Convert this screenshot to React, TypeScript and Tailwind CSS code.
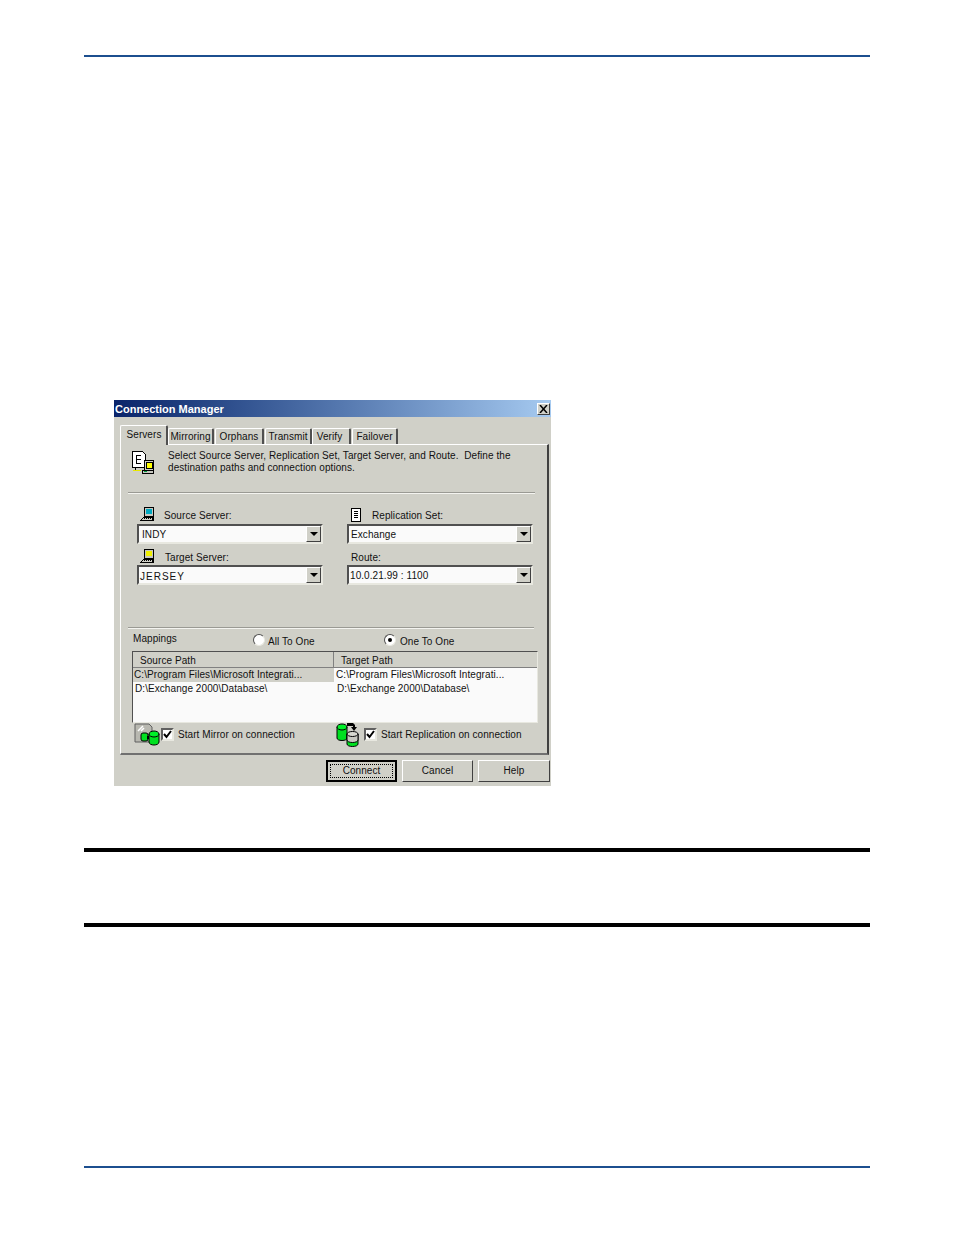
import React from 'react';

const Win = 'border border-t-white border-l-white border-r-[#404040] border-b-[#404040]';

const ComputerIcon = ({ screen }: { screen: string }) => (
    <svg width="15" height="15" viewBox="0 0 15 15" shapeRendering="crispEdges" className="shrink-0">
        <path d="M4 0h10v10H4z" fill="#000" />
        <path d="M5 1h8v8H5z" fill="#c8c8c0" />
        <path d="M6 2h6v5H6z" fill={screen} />
        <path d="M3 10h11v1H3zM2 11h12v1H2zM1 12h13v1H1zM0 13h14v1H0z" fill="#000" />
        <path d="M3 11h1v1H3zM5 11h1v1H5zM7 11h1v1H7zM9 11h1v1H9zM11 11h1v1h-1zM2 12h10v1H2z" fill="#d0d0c8" />
    </svg>
);

const DocIcon = () => (
    <svg width="10" height="14" viewBox="0 0 10 14" shapeRendering="crispEdges" className="shrink-0">
        <path d="M0 0h10v14H0z" fill="#000" />
        <path d="M1 1h8v12H1z" fill="#fff" />
        <path d="M3 3h4v1H3zM3 5h4v1H3zM3 7h4v1H3zM3 9h4v1H3z" fill="#000" />
    </svg>
);

const InfoIcon = () => (
    <svg width="24" height="24" viewBox="0 0 24 24" shapeRendering="crispEdges" className="shrink-0">
        <path d="M1 0h10l3 3v13H1z" fill="#fff" stroke="#000" />
        <path d="M5 4h5v1H6v3h4v1H6v3h4v1H5z" fill="#000" />
        <path d="M4 17h1v3H4z" fill="#000" />
        <path d="M2 19h8v1H2z" fill="#e8e800" />
        <path d="M13 9h9v10h-9z" fill="#d0d0c8" stroke="#000" />
        <path d="M15 11h6v6h-6z" fill="#ffff00" stroke="#000" />
        <path d="M11 19h12v4H11z" fill="#000" />
        <path d="M12 20h10v2H12z" fill="#c8c8c0" />
        <path d="M13 20h3v1h-3z" fill="#00a040" />
    </svg>
);

const MirrorIcon = () => (
    <svg width="26" height="23" viewBox="0 0 26 23" className="shrink-0">
        <path d="M1 1h14l3 3v15H1z" fill="#b8b8b0" stroke="#606060" />
        <path d="M4 8l5-5M7 8l3-3" stroke="#fff" strokeWidth="1.5" />
        <rect x="7" y="10" width="7" height="8" rx="2" fill="#00e020" stroke="#000" />
        <path d="M13 13h3v3h-3z" fill="#000" />
        <path d="M15 11v8c0 2 2.500 3 5 3s5-1 5-3v-8z" fill="#00e020" stroke="#000" />
        <ellipse cx="20" cy="11" rx="5" ry="3" fill="#00f028" stroke="#000" />
    </svg>
);

const ReplicationIcon = () => (
    <svg width="23" height="24" viewBox="0 0 23 24" className="shrink-0">
        <path d="M1 4v11c0 1.500 2 2.500 5 2.500s5-1 5-2.500V4z" fill="#00e020" stroke="#000" />
        <ellipse cx="6" cy="4" rx="5" ry="3" fill="#00f028" stroke="#000" />
        <path d="M11 11v10c0 1.500 2.500 2.500 5.500 2.500s5.500-1 5.500-2.500V11z" fill="#00e020" stroke="#000" />
        <path d="M11 11v6c0 1.500 2.500 2.500 5.500 2.500s5.500-1 5.500-2.500v-6z" fill="#c8c8c0" stroke="#000" />
        <ellipse cx="16.500" cy="11" rx="5.500" ry="2.500" fill="#d8d8d0" stroke="#000" />
        <path d="M11 0h6l2 2v2h2l-3 4-3-4h2V3h-6z" fill="#000" />
    </svg>
);

const Tab = ({ label, className }: { label: string; className: string }) => (
    <div className={`h-[16px] mt-[3px] border-t border-l border-white border-r-2 border-r-[#505050] rounded-t-[2px] flex items-center justify-center text-[#111] ${className}`}>
        {label}
    </div>
);

const Combo = ({ value, className }: { value: string; className?: string }) => (
    <div className="h-[20px] w-[186px] border-2 border-t-[#505050] border-l-[#505050] border-r-[#e8e8e0] border-b-[#e8e8e0] bg-[#fafafa] flex items-center justify-between">
        <span className={`text-[#111] ${className ?? ''}`}>{value}</span>
        <div className={`w-[15px] h-[16px] bg-[#d0d0c8] flex items-center justify-center ${Win}`}>
            <div className="w-0 h-0 border-l-[4px] border-r-[4px] border-t-[4px] border-l-transparent border-r-transparent border-t-black" />
        </div>
    </div>
);

const Radio = ({ checked }: { checked?: boolean }) => (
    <div className="w-[12px] h-[12px] rounded-full bg-white border border-t-[#505050] border-l-[#505050] border-r-[#e8e8e0] border-b-[#e8e8e0] flex items-center justify-center">
        {checked && <div className="w-[4px] h-[4px] rounded-full bg-black" />}
    </div>
);

const Check = () => (
    <div className="w-[13px] h-[13px] bg-white border-2 border-t-[#606060] border-l-[#606060] border-r-[#e8e8e0] border-b-[#e8e8e0] flex items-center justify-center shrink-0">
        <svg width="9" height="9" viewBox="0 0 9 9"><path d="M1 4l2.500 3L8 1" fill="none" stroke="#000" strokeWidth="2" /></svg>
    </div>
);

const Btn = ({ label, className }: { label: string; className: string }) => (
    <div className={`h-[22px] bg-[#d0d0c8] flex items-center justify-center text-[#111] ${Win} ${className}`}>{label}</div>
);

const Sep = ({ className }: { className: string }) => (
    <div className={`h-[2px] border-t border-t-[#9a9a94] border-b border-b-[#f4f4f0] ${className}`} />
);

export default function App() {
    return (
        <div className="w-[954px] h-[1235px] bg-white pt-[55px] px-[84px] overflow-hidden" style={{ fontFamily: '"Liberation Sans", Arial, sans-serif' }}>
            <div className="h-[2px] bg-[#1c4f8f]" />

            <div className="ml-[30px] mt-[343px] w-[437px] h-[386px] bg-[#d0d0c8] text-[10px] tracking-[0.07px] leading-[12px]">
                <div className="h-[17px] bg-gradient-to-r from-[#0a246a] to-[#a6caf0] flex items-center justify-between pr-[1px]">
                    <span className="pl-[1px] text-[11px] tracking-normal font-bold text-white">Connection Manager</span>
                    <div className={`w-[13px] h-[12px] bg-[#d0d0c8] flex items-center justify-center ${Win}`}>
                        <svg width="9" height="8" viewBox="0 0 9 8"><path d="M1 0l7 8M8 0L1 8" stroke="#000" strokeWidth="1.500" /></svg>
                    </div>
                </div>

                <div className="flex h-[19px] mt-[8px] ml-[6px] items-start">
                    <div className="w-[48px] h-[20px] relative z-10 bg-[#d0d0c8] border-t border-l border-white border-r-2 border-r-[#505050] rounded-t-[2px] flex items-center justify-center pb-[1px] pl-[1px] text-[#111]">Servers</div>
                    <Tab label="Mirroring" className="w-[46px]" />
                    <Tab label="Orphans" className="w-[49px] ml-[1px]" />
                    <Tab label="Transmit" className="w-[47px] ml-[1px]" />
                    <Tab label="Verify" className="w-[39px] pr-[3px]" />
                    <Tab label="Failover" className="w-[46px] ml-[1px]" />
                </div>

                <div className="ml-[6px] w-[429px] h-[311px] border-t border-l border-white border-r-2 border-r-[#404040] border-b-2 border-b-[#707070]">
                    <div className="flex h-[47px]">
                        <div className="ml-[10px] mt-[6px]"><InfoIcon /></div>
                        <div className="ml-[13px] mt-[5px] leading-[12px] text-[#111] whitespace-pre">
                            {'Select Source Server, Replication Set, Target Server, and Route.  Define the\ndestination paths and connection options.'}
                        </div>
                    </div>
                    <Sep className="ml-[7px] w-[407px]" />

                    <div className="flex ml-[16px] mt-[13px] gap-[24px]">
                        <div className="w-[186px]">
                            <div className="flex items-center h-[15px] ml-[3px] gap-[9px] text-[#111]"><ComputerIcon screen="#00a8c0" /><span className="pt-[2px]">Source Server:</span></div>
                            <div className="mt-[2px]"><Combo value="INDY" className="pl-[3px] pt-[2px]" /></div>
                            <div className="flex items-center h-[15px] mt-[5px] ml-[3px] gap-[9px] text-[#111]"><ComputerIcon screen="#f0f000" /><span className="ml-[1px] pt-[2px]">Target Server:</span></div>
                            <div className="mt-[1px]"><Combo value="JERSEY" className="pl-[1px] pt-[3px] tracking-[1px]" /></div>
                        </div>
                        <div className="w-[186px]">
                            <div className="flex items-center h-[15px] ml-[4px] gap-[11px] text-[#111]"><DocIcon /><span className="pt-[2px]">Replication Set:</span></div>
                            <div className="mt-[2px]"><Combo value="Exchange" className="pl-[2px] pt-[2px]" /></div>
                            <div className="flex items-center h-[15px] mt-[5px] ml-[4px] text-[#111]"><span className="pt-[2px]">Route:</span></div>
                            <div className="mt-[1px]"><Combo value="10.0.21.99 : 1100" className="pl-[1px] pt-[1px]" /></div>
                        </div>
                    </div>

                    <Sep className="ml-[7px] w-[406px] mt-[42px]" />

                    <div className="flex items-center h-[22px] ml-[12px] text-[#111]">
                        <span className="w-[120px] pb-[3px]">Mappings</span>
                        <Radio />
                        <span className="ml-[3px] w-[116px] pt-[3px]">All To One</span>
                        <Radio checked />
                        <span className="ml-[4px] pt-[3px]">One To One</span>
                    </div>

                    <div className="ml-[11px] w-[406px] h-[72px] border border-t-[#505050] border-l-[#505050] border-r-[#e8e8e0] border-b-[#e8e8e0] bg-[#fafafa] text-[#111]">
                        <div className="flex h-[16px] bg-[#d0d0c8] border-b border-[#808080]">
                            <div className="w-[201px] pl-[7px] border-r border-[#808080] leading-[17px]">Source Path</div>
                            <div className="pl-[7px] leading-[17px]">Target Path</div>
                        </div>
                        <div className="flex h-[14px] leading-[14px]">
                            <div className="w-[201px] pl-[1px] bg-[#d0d0c8]">C:\Program Files\Microsoft Integrati...</div>
                            <div className="pl-[2px]">C:\Program Files\Microsoft Integrati...</div>
                        </div>
                        <div className="flex h-[13px] leading-[13px]">
                            <div className="w-[201px] pl-[2px]">D:\Exchange 2000\Database\</div>
                            <div className="pl-[3px]">D:\Exchange 2000\Database\</div>
                        </div>
                    </div>

                    <div className="flex items-center h-[23px] ml-[13px] text-[#111]">
                        <MirrorIcon />
                        <div className="ml-[1px]"><Check /></div>
                        <span className="ml-[4px] w-[158px]">Start Mirror on connection</span>
                        <ReplicationIcon />
                        <div className="ml-[5px]"><Check /></div>
                        <span className="ml-[4px]">Start Replication on connection</span>
                    </div>
                </div>

                <div className="flex mt-[5px] ml-[212px] gap-[5px]">
                    <div className="w-[71px] h-[22px] border-2 border-black p-[2px]">
                        <div className="h-full border border-dotted border-black flex items-center justify-center text-[#111]">Connect</div>
                    </div>
                    <Btn label="Cancel" className="w-[71px]" />
                    <Btn label="Help" className="w-[72px]" />
                </div>
            </div>

            <div className="h-[4px] bg-black mt-[62px]" />
            <div className="h-[4px] bg-black mt-[71px]" />
            <div className="h-[2px] bg-[#1c4f8f] mt-[239px]" />
        </div>
    );
}
